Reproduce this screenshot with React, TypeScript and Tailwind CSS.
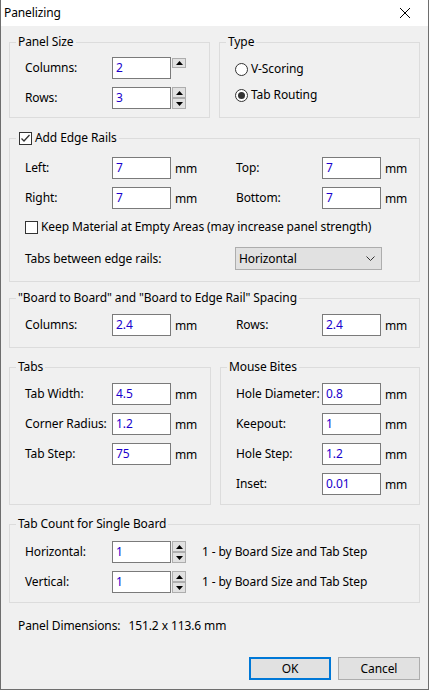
import React from "react";

const Field = ({ v }: { v: string }) => (
  <div className="w-[59px] h-[22px] shrink-0 border border-[#7a7a7a] bg-white text-[#1a00cc] pl-[3px] flex items-center leading-[16px]">
    {v}
  </div>
);

const Arrow = ({ up }: { up: boolean }) => (
  <svg width="7" height="4" viewBox="0 0 7 4">
    {up ? <polygon points="0,4 7,4 3.5,0" fill="#000" /> : <polygon points="0,0 7,0 3.5,4" fill="#000" />}
  </svg>
);

const SpinBtn = ({ up }: { up: boolean }) => (
  <div className="w-[14px] h-[11px] border border-[#adadad] bg-[#e1e1e1] flex items-center justify-center">
    <Arrow up={up} />
  </div>
);

const Spinner = ({ onlyUp }: { onlyUp?: boolean }) =>
  onlyUp ? (
    <div className="ml-[1px] self-start mt-[1px] flex flex-col">
      <div className="w-[14px] h-[10px] border border-[#adadad] bg-[#e1e1e1] flex items-center justify-center">
        <Arrow up />
      </div>
    </div>
  ) : (
    <div className="ml-[1px] flex flex-col">
      <SpinBtn up />
      <SpinBtn up={false} />
    </div>
  );

const Group = ({
  title,
  className,
  children,
}: {
  title: React.ReactNode;
  className: string;
  children: React.ReactNode;
}) => (
  <div className={"relative border border-[#dcdcdc] " + className}>
    <div className="absolute top-[-9px] left-[6px] px-[2px] bg-[#f0f0f0] leading-[16px] flex items-center">
      {title}
    </div>
    {children}
  </div>
);

const Mm = () => <span className="ml-[4px] leading-[16px] pt-[2px]">mm</span>;

const Row = ({ label, v, lw, mm = true }: { label: string; v: string; lw: string; mm?: boolean }) => (
  <div className="flex items-center h-[22px]">
    <span className={"leading-[16px] whitespace-nowrap " + lw}>{label}</span>
    <Field v={v} />
    {mm && <Mm />}
  </div>
);

const Check = ({ checked }: { checked: boolean }) => (
  <div className="w-[13px] h-[13px] border border-[#333333] bg-white flex items-center justify-center shrink-0">
    {checked && (
      <svg width="11" height="11" viewBox="0 0 11 11">
        <polyline points="1.5,5.5 4,8 9.5,2" fill="none" stroke="#333333" strokeWidth="1.3" />
      </svg>
    )}
  </div>
);

const Radio = ({ checked, label }: { checked: boolean; label: string }) => (
  <div className="flex items-center h-[16px] gap-[3px]">
    <div className="w-[13px] h-[13px] rounded-full border border-[#333333] bg-white flex items-center justify-center">
      {checked && <div className="w-[7px] h-[7px] rounded-full bg-[#333333]" />}
    </div>
    <span className="leading-[16px]">{label}</span>
  </div>
);

export default function App() {
  return (
    <div
      className="w-[429px] h-[690px] bg-[#f0f0f0] border-x border-b border-[#6e6e6e] flex flex-col text-[12px] text-black tracking-[-0.1px]"
      style={{ fontFamily: '"Noto Sans", "Liberation Sans", sans-serif' }}
    >
      {/* Title bar */}
      <div className="h-[26px] bg-white flex items-center justify-between pl-[3px] pr-[17px] shrink-0">
        <span className="leading-[16px]">Panelizing</span>
        <svg width="12" height="12" viewBox="0 0 12 12">
          <line x1="1" y1="1" x2="11" y2="11" stroke="#000" strokeWidth="1" />
          <line x1="11" y1="1" x2="1" y2="11" stroke="#000" strokeWidth="1" />
        </svg>
      </div>

      <div className="flex flex-col px-[8px] pt-[16px]">
        {/* Row 1 */}
        <div className="flex gap-[9px]">
          <Group title="Panel Size" className="w-[201px] h-[76px]">
            <div className="pt-[14px] pl-[15px] flex flex-col gap-[8px]">
              <div className="flex items-center h-[22px]">
                <span className="w-[87px] leading-[16px]">Columns:</span>
                <Field v="2" />
                <Spinner onlyUp />
              </div>
              <div className="flex items-center h-[22px]">
                <span className="w-[87px] leading-[16px]">Rows:</span>
                <Field v="3" />
                <Spinner />
              </div>
            </div>
          </Group>
          <Group title="Type" className="flex-1 h-[76px]">
            <div className="pt-[18px] pl-[15px] flex flex-col gap-[10px]">
              <Radio checked={false} label="V-Scoring" />
              <Radio checked label="Tab Routing" />
            </div>
          </Group>
        </div>

        {/* Edge rails */}
        <Group
          title={
            <div className="flex items-center gap-[3px] ml-[1px]">
              <Check checked />
              <span>Add Edge Rails</span>
            </div>
          }
          className="mt-[20px] h-[144px]"
        >
          <div className="pt-[18px] pl-[15px] flex flex-col">
            <div className="flex flex-col gap-[8px]">
              <div className="flex">
                <div className="w-[211px]">
                  <Row label="Left:" v="7" lw="w-[87px]" />
                </div>
                <Row label="Top:" v="7" lw="w-[86px]" />
              </div>
              <div className="flex">
                <div className="w-[211px]">
                  <Row label="Right:" v="7" lw="w-[87px]" />
                </div>
                <Row label="Bottom:" v="7" lw="w-[86px]" />
              </div>
            </div>
            <div className="mt-[10px] h-[16px] flex items-center gap-[3px]">
              <Check checked={false} />
              <span className="leading-[16px]">Keep Material at Empty Areas (may increase panel strength)</span>
            </div>
            <div className="mt-[12px] flex items-center">
              <span className="w-[210px] leading-[16px]">Tabs between edge rails:</span>
              <div className="w-[147px] h-[23px] border border-[#adadad] bg-[#e1e1e1] flex items-center justify-between pl-[3px] pr-[6px]">
                <span className="leading-[16px]">Horizontal</span>
                <svg width="9" height="5" viewBox="0 0 9 5">
                  <polyline points="0.5,0.5 4.5,4.5 8.5,0.5" fill="none" stroke="#333" strokeWidth="1" />
                </svg>
              </div>
            </div>
          </div>
        </Group>

        {/* Spacing */}
        <Group
          title={'"Board to Board" and "Board to Edge Rail" Spacing'}
          className="mt-[16px] h-[50px]"
        >
          <div className="pt-[15px] pl-[15px] flex">
            <div className="w-[211px]">
              <Row label="Columns:" v="2.4" lw="w-[87px]" />
            </div>
            <Row label="Rows:" v="2.4" lw="w-[86px]" />
          </div>
        </Group>

        {/* Tabs / Mouse bites */}
        <div className="mt-[19px] flex gap-[9px]">
          <Group title="Tabs" className="w-[202px] h-[138px]">
            <div className="pt-[15px] pl-[15px] flex flex-col gap-[8px]">
              <Row label="Tab Width:" v="4.5" lw="w-[87px]" />
              <Row label="Corner Radius:" v="1.2" lw="w-[87px]" />
              <Row label="Tab Step:" v="75" lw="w-[87px]" />
            </div>
          </Group>
          <Group title="Mouse Bites" className="flex-1 h-[138px]">
            <div className="pt-[15px] pl-[15px] flex flex-col gap-[8px]">
              <Row label="Hole Diameter:" v="0.8" lw="w-[86px]" />
              <Row label="Keepout:" v="1" lw="w-[86px]" />
              <Row label="Hole Step:" v="1.2" lw="w-[86px]" />
              <Row label="Inset:" v="0.01" lw="w-[86px]" />
            </div>
          </Group>
        </div>

        {/* Tab count */}
        <Group title="Tab Count for Single Board" className="mt-[19px] h-[79px]">
          <div className="pt-[16px] pl-[15px] flex flex-col gap-[8px]">
            <div className="flex items-center h-[22px]">
              <span className="w-[87px] leading-[16px]">Horizontal:</span>
              <Field v="1" />
              <Spinner />
              <span className="ml-[16px] leading-[16px]">1 - by Board Size and Tab Step</span>
            </div>
            <div className="flex items-center h-[22px]">
              <span className="w-[87px] leading-[16px]">Vertical:</span>
              <Field v="1" />
              <Spinner />
              <span className="ml-[16px] leading-[16px]">1 - by Board Size and Tab Step</span>
            </div>
          </div>
        </Group>

        <div className="mt-[15px] pl-[9px] flex gap-[8px] leading-[16px]">
          <span>Panel Dimensions:</span>
          <span>151.2 x 113.6 mm</span>
        </div>

        <div className="mt-[23px] flex justify-end gap-[7px]">
          <button className="w-[82px] h-[23px] border-2 border-[#0078d7] bg-[#e1e1e1] flex items-center justify-center leading-[16px]">
            OK
          </button>
          <button className="w-[82px] h-[23px] border border-[#adadad] bg-[#e1e1e1] flex items-center justify-center leading-[16px]">
            Cancel
          </button>
        </div>
      </div>
    </div>
  );
}
